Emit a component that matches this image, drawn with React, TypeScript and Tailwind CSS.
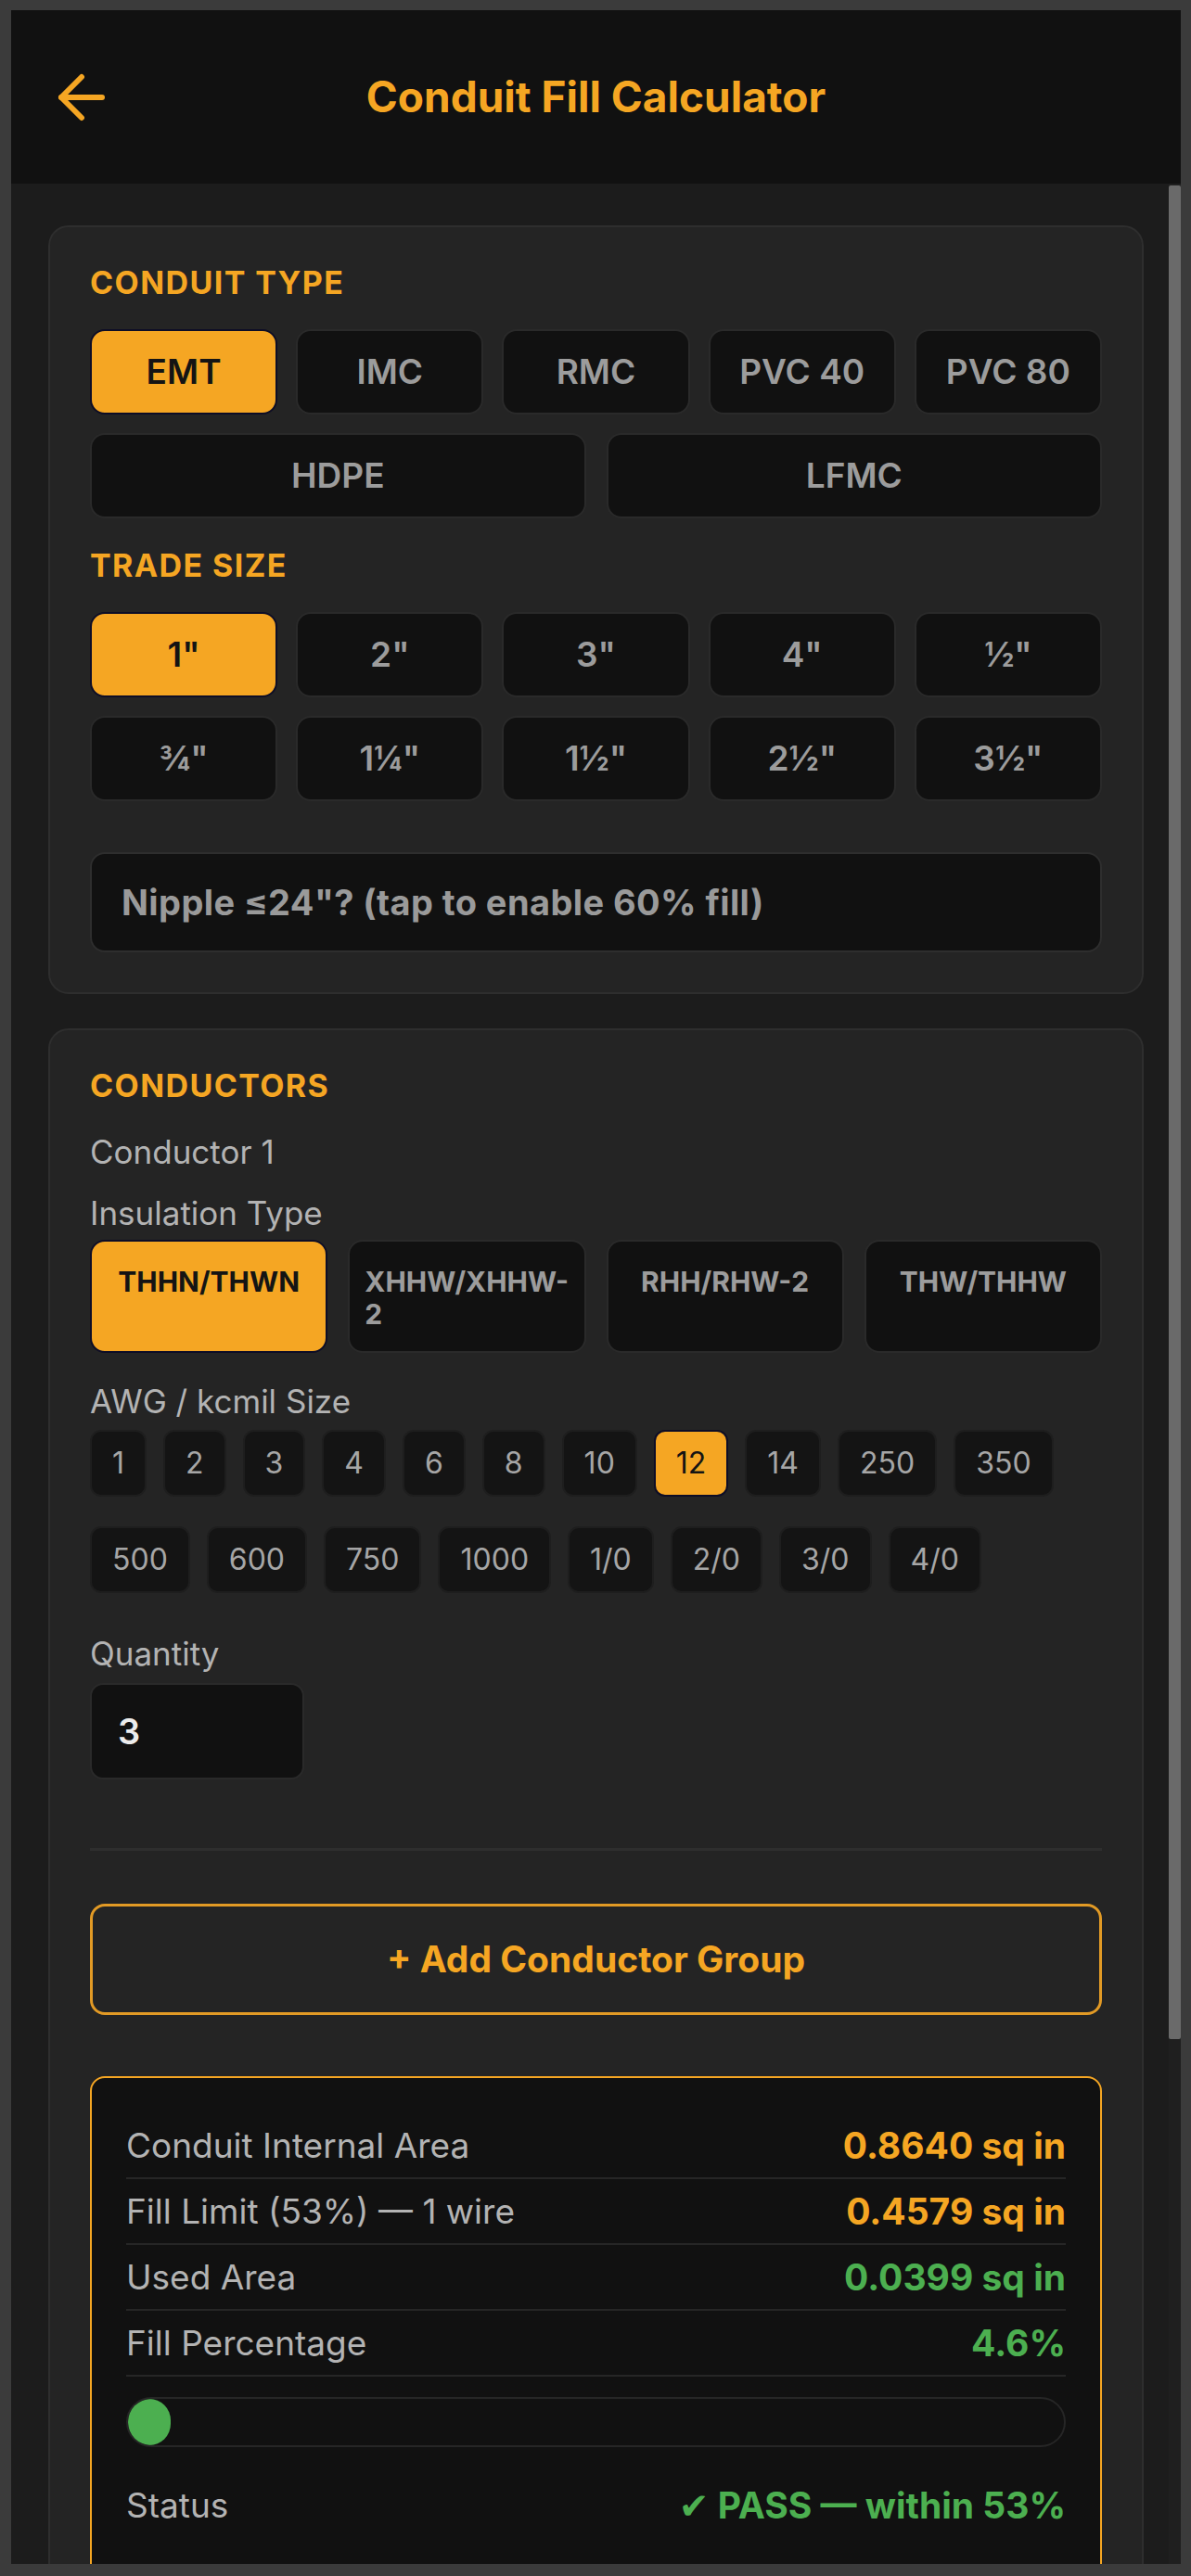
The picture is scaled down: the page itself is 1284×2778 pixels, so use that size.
import { useState } from "react";

const CONDUIT_TYPES = ["EMT", "IMC", "RMC", "PVC 40", "PVC 80"];
const CONDUIT_TYPES_WIDE = ["HDPE", "LFMC"];
const TRADE_SIZES = ['1"', '2"', '3"', '4"', '½"', '¾"', '1¼"', '1½"', '2½"', '3½"'];
const INSULATION = ["THHN/THWN", "XHHW/XHHW-2", "RHH/RHW-2", "THW/THHW"];
const AWG_SIZES = ["1", "2", "3", "4", "6", "8", "10", "12", "14", "250", "350", "500", "600", "750", "1000", "1/0", "2/0", "3/0", "4/0"];

const RESULTS = [
  { label: "Conduit Internal Area", value: "0.8640 sq in", tone: "orange" },
  { label: "Fill Limit (53%) — 1 wire", value: "0.4579 sq in", tone: "orange" },
  { label: "Used Area", value: "0.0399 sq in", tone: "green" },
  { label: "Fill Percentage", value: "4.6%", tone: "green" },
];

const FILL_PCT = 4.6;

// lets the label wrap after a hyphen ("XHHW/XHHW-" / "2")
function breakAfterHyphen(text: string) {
  const i = text.lastIndexOf("-");
  if (i < 0) return text;
  return (
    <>
      {text.slice(0, i + 1)}
      <wbr />
      {text.slice(i + 1)}
    </>
  );
}

function OptionButton({ label, active, onClick }: { label: string; active: boolean; onClick: () => void }) {
  return (
    <button
      onClick={onClick}
      className={`h-[92px] rounded-[16px] border-2 text-[37px] font-semibold flex items-center justify-center ${
        active ? "bg-[#f5a623] border-[#0d0d26] text-[#141414]" : "bg-[#111111] border-[#2a2a2a] text-[#9c9c9c]"
      }`}
    >
      {label}
    </button>
  );
}

function SectionTitle({ children }: { children: string }) {
  return <h2 className="text-[34px] leading-[34px] font-bold tracking-[1.4px] uppercase text-[#f5a623]">{children}</h2>;
}

function FieldLabel({ children, className = "" }: { children: string; className?: string }) {
  return <p className={`text-[35px] leading-[44px] text-[#b3b3b3] ${className}`}>{children}</p>;
}

export default function App() {
  const [conduit, setConduit] = useState("EMT");
  const [trade, setTrade] = useState('1"');
  const [insulation, setInsulation] = useState("THHN/THWN");
  const [awg, setAwg] = useState("12");

  return (
    <div className="h-[2778px] overflow-hidden bg-[#3b3b3b] pt-[11px] pr-[11px] pb-[13px] pl-[12px] font-['Inter','DejaVu_Sans',sans-serif]">
      <div className="h-full flex flex-col">
        {/* top bar */}
        <header className="h-[187px] shrink-0 bg-[#111111] grid grid-cols-[140px_1fr_140px] items-center">
          <div className="pl-[49px]">
            <svg width="52" height="52" viewBox="0 0 52 52" fill="none" stroke="#f5a623" strokeWidth="6" strokeLinecap="round" strokeLinejoin="round">
              <path d="M49 26H5" />
              <path d="M27 4L5 26L27 48" />
            </svg>
          </div>
          <h1 className="text-center text-[46px] font-bold text-[#f5a623]">Conduit Fill Calculator</h1>
          <div />
        </header>

        <div className="relative flex-1 overflow-hidden bg-[#1c1c1c]">
          <main className="px-[40px] pt-[45px]">
            {/* conduit + trade size */}
            <section className="rounded-[22px] border-2 border-[#2e2e2e] bg-[#242424] p-[43px]">
              <SectionTitle>Conduit Type</SectionTitle>
              <div className="mt-[33px] grid grid-cols-5 gap-[20px]">
                {CONDUIT_TYPES.map((t) => (
                  <OptionButton key={t} label={t} active={conduit === t} onClick={() => setConduit(t)} />
                ))}
              </div>
              <div className="mt-[20px] grid grid-cols-2 gap-[22px]">
                {CONDUIT_TYPES_WIDE.map((t) => (
                  <OptionButton key={t} label={t} active={conduit === t} onClick={() => setConduit(t)} />
                ))}
              </div>

              <div className="mt-[34px]">
                <SectionTitle>Trade Size</SectionTitle>
              </div>
              <div className="mt-[33px] grid grid-cols-5 gap-[20px]">
                {TRADE_SIZES.map((t) => (
                  <OptionButton key={t} label={t} active={trade === t} onClick={() => setTrade(t)} />
                ))}
              </div>

              <button className="mt-[55px] w-full h-[108px] rounded-[16px] border-2 border-[#2e2e2e] bg-[#111111] pl-[32px] text-left text-[38px] font-bold tracking-[0.4px] text-[#9a9a9a]">
                Nipple ≤24"? (tap to enable 60% fill)
              </button>
            </section>

            {/* conductors */}
            <section className="mt-[37px] rounded-[22px] border-2 border-[#2e2e2e] bg-[#242424] p-[43px]">
              <SectionTitle>Conductors</SectionTitle>
              <FieldLabel className="mt-[32px]">Conductor 1</FieldLabel>
              <FieldLabel className="mt-[22px]">Insulation Type</FieldLabel>
              <div className="mt-[7px] grid grid-cols-4 gap-[22px]">
                {INSULATION.map((t) => (
                  <button
                    key={t}
                    onClick={() => setInsulation(t)}
                    className={`rounded-[16px] border-2 pt-[26px] pb-[22px] px-[16px] flex justify-center items-start text-left text-[30px] leading-[35px] font-bold ${
                      insulation === t ? "bg-[#f5a623] border-[#0d0d26] text-[#141414]" : "bg-[#111111] border-[#2a2a2a] text-[#9c9c9c]"
                    }`}
                  >
                    <span className="text-left">{breakAfterHyphen(t)}</span>
                  </button>
                ))}
              </div>

              <FieldLabel className="mt-[30px]">AWG / kcmil Size</FieldLabel>
              <div className="mt-[9px] flex flex-wrap gap-x-[18px] gap-y-[32px]">
                {AWG_SIZES.map((s) => (
                  <button
                    key={s}
                    onClick={() => setAwg(s)}
                    className={`h-[72px] px-[22px] rounded-[12px] border-2 text-[32px] flex items-center ${
                      awg === s ? "bg-[#f5a623] border-[#0d0d26] text-[#141414]" : "bg-[#141414] border-[#1e1e1e] text-[#a6a6a6]"
                    }`}
                  >
                    {s}
                  </button>
                ))}
              </div>

              <FieldLabel className="mt-[43px]">Quantity</FieldLabel>
              <div className="mt-[10px] w-[231px] h-[104px] rounded-[14px] border-2 border-[#2a2a2a] bg-[#111111] pl-[28px] flex items-center text-[38px] font-semibold text-[#ececec]">
                3
              </div>

              <div className="mt-[74px] h-[3px] bg-[#2e2e2e]" />

              <button className="mt-[57px] w-full h-[120px] rounded-[16px] border-[3px] border-[#e29a25] text-[39px] font-bold text-[#f5a623]">
                + Add Conductor Group
              </button>

              {/* results */}
              <div className="mt-[66px] rounded-[16px] border-2 border-[#f5a623] bg-[#111111] px-[37px] pt-[38px] pb-[60px]">
                {RESULTS.map((r) => (
                  <div key={r.label} className="flex items-center justify-between py-[14px] leading-[41px] border-b-2 border-[#262626]">
                    <span className="text-[37px] text-[#b3b3b3]">{r.label}</span>
                    <span className={`text-[39px] font-bold ${r.tone === "green" ? "text-[#4caf50]" : "text-[#f5a623]"}`}>{r.value}</span>
                  </div>
                ))}
                <div className="mt-[22px] h-[54px] rounded-full border-2 border-[#262626] bg-[#111111] overflow-hidden">
                  <div className="h-full rounded-full bg-[#4caf50]" style={{ width: `${FILL_PCT}%` }} />
                </div>
                <div className="mt-[28px] flex items-center justify-between py-[14px] leading-[41px]">
                  <span className="text-[37px] text-[#b3b3b3]">Status</span>
                  <span className="text-[39px] font-bold text-[#4caf50]">✔ PASS — within 53%</span>
                </div>
              </div>
            </section>
          </main>

          {/* overlay scrollbar */}
          <div className="absolute right-0 top-0 h-full w-[13px] bg-[#1f1f1f]">
            <div className="mt-[2px] h-[1999px] w-full rounded-[2px] bg-[#6a6a6a]" />
          </div>
        </div>
      </div>
    </div>
  );
}
